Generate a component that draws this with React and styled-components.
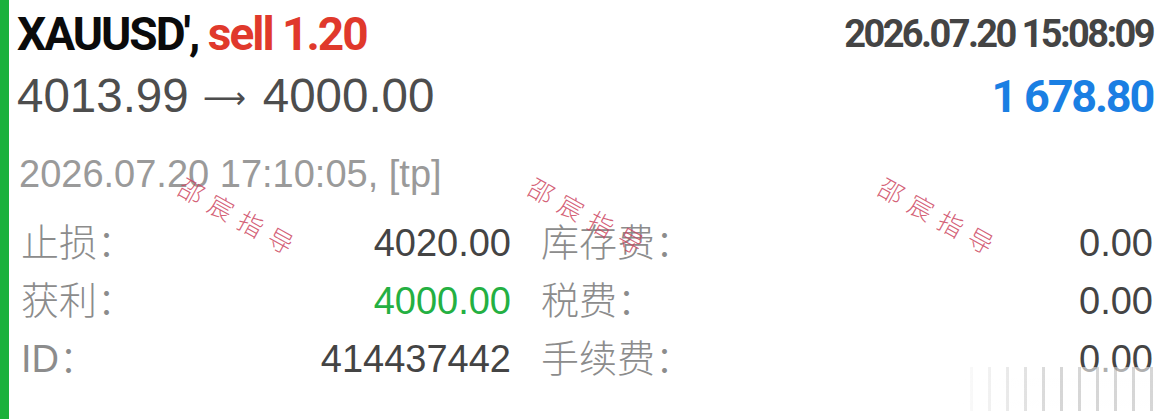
import React from 'react'
import styled, { createGlobalStyle } from 'styled-components'

const GlobalStyle = createGlobalStyle`
    html, body {
        margin:0;
        padding:0;
        background:#fff;
    }
    body {
        font-family:"Liberation Sans", Arial, sans-serif;
    }
`

const CJK = `"Liberation Sans", "Noto Sans CJK SC", sans-serif`

const Card = styled('div')`
    position:relative;
    width:1170px;
    height:419px;
    box-sizing:border-box;
    border-left:9px solid #1bb13c;
    padding:3px 17px 0 8px;
    overflow:hidden;
    background:#fff;
`
const HeadRow = styled('div')`
    display:flex;
    justify-content:space-between;
    align-items:flex-start;
`
const Symbol = styled('h1')`
    margin:0;
    font-family:Roboto, sans-serif;
    font-size:46px;
    line-height:62px;
    font-weight:700;
    letter-spacing:-2px;
    color:#0b0b0b;
    span {
        color:#e0392c;
    }
`
const OpenTime = styled('div')`
    font-family:Roboto, sans-serif;
    font-size:38px;
    line-height:62px;
    font-weight:700;
    letter-spacing:-2.6px;
    color:#444;
`
const PriceRow = styled(HeadRow)`
    align-items:baseline;
`
const Prices = styled('div')`
    font-size:47.5px;
    line-height:62px;
    color:#4d4d4d;
`
const Arrow = styled('span')`
    display:inline-block;
    margin:0 17px 0 14px;
    font-family:"DejaVu Sans", sans-serif;
    font-size:30px;
    vertical-align:4px;
`
const Profit = styled('div')`
    font-family:Roboto, sans-serif;
    font-size:45px;
    line-height:62px;
    font-weight:700;
    letter-spacing:-2.2px;
    color:#1a7fe3;
`
const CloseTime = styled('div')`
    margin-top:15px;
    padding-left:2px;
    font-size:38px;
    line-height:60px;
    color:#9a9a9a;
`
const Details = styled('div')`
    margin-top:10px;
    padding-left:4px;
    display:grid;
    grid-template-columns:490px 1fr;
    column-gap:30px;
`
const Field = styled('div')`
    display:flex;
    justify-content:space-between;
    align-items:baseline;
    font-size:38px;
    line-height:58px;
`
const Label = styled('span')`
    font-family:${CJK};
    font-weight:300;
    color:#8c8c8c;
`
const Value = styled('span')`
    color:${p => p.$tone || '#444'};
`
const Stamp = styled('div')`
    position:absolute;
    top:${p => p.$top}px;
    left:${p => p.$left}px;
    transform:rotate(29deg);
    transform-origin:left center;
    font-family:"Noto Sans CJK SC", sans-serif;
    font-weight:300;
    font-size:25px;
    letter-spacing:9px;
    color:rgba(205, 70, 95, 0.85);
    white-space:nowrap;
    pointer-events:none;
`
const Smear = styled('div')`
    position:absolute;
    right:15px;
    bottom:8px;
    width:200px;
    height:44px;
    background:
        repeating-linear-gradient(90deg, rgba(255,255,255,0) 0 15px, rgba(120,120,120,0.3) 15px 18px),
        linear-gradient(to bottom, rgba(255,255,255,0.55), rgba(255,255,255,0.9));
    -webkit-mask-image:linear-gradient(to right, transparent, #000 50%);
    mask-image:linear-gradient(to right, transparent, #000 50%);
`

const fields = [
    [{ label: '止损：', value: '4020.00' }, { label: '库存费：', value: '0.00' }],
    [{ label: '获利：', value: '4000.00', tone: '#24b042' }, { label: '税费：', value: '0.00' }],
    [{ label: 'ID：', value: '414437442' }, { label: '手续费：', value: '0.00' }],
]

const App = () => {
    return (
        <>
            <GlobalStyle />
            <Card>
                <HeadRow>
                    <Symbol>XAUUSD', <span>sell 1.20</span></Symbol>
                    <OpenTime>2026.07.20 15:08:09</OpenTime>
                </HeadRow>
                <PriceRow>
                    <Prices>4013.99<Arrow>⟶</Arrow>4000.00</Prices>
                    <Profit>1 678.80</Profit>
                </PriceRow>
                <CloseTime>2026.07.20 17:10:05, [tp]</CloseTime>
                <Details>
                    {fields.map((row, i) => row.map((f, j) => (
                        <Field key={i + '-' + j}>
                            <Label>{f.label}</Label>
                            <Value $tone={f.tone}>{f.value}</Value>
                        </Field>
                    )))}
                </Details>
                {[172, 522, 872].map(x => (
                    <Stamp key={x} $left={x} $top={166}>邵宸指导</Stamp>
                ))}
                <Smear />
            </Card>
        </>
    )
}
export default App
